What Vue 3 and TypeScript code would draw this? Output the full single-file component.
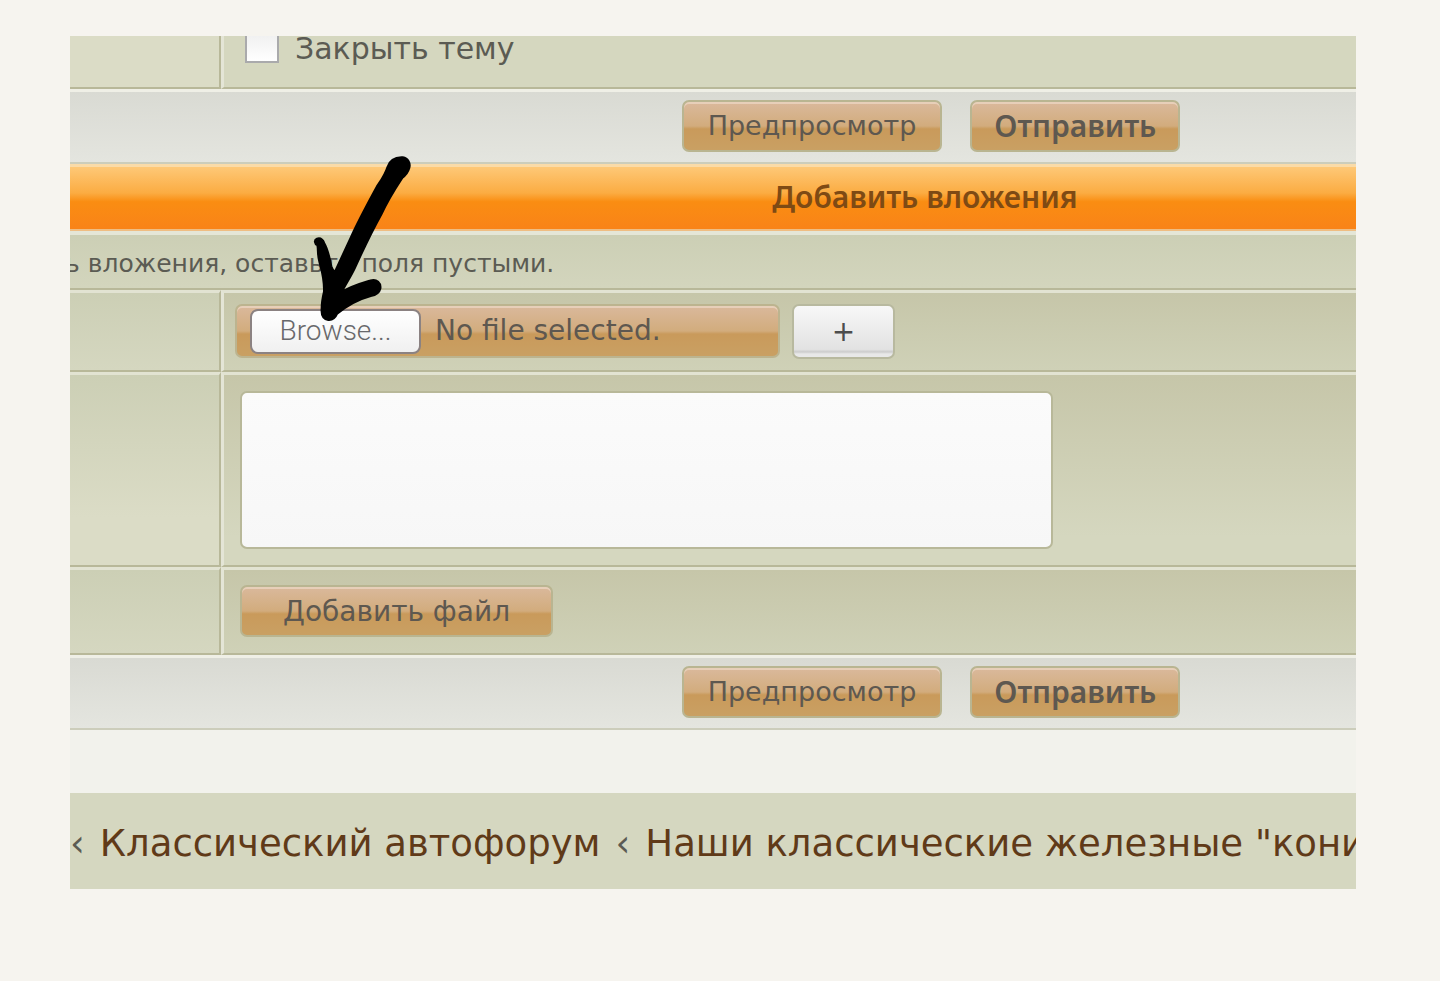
<script setup lang="ts">
import { ref } from 'vue'

const closeTopic = ref(false)
const comment = ref('')
const fileName = ref('No file selected.')

function pickFile(event: Event): void {
  const input = event.target as HTMLInputElement
  fileName.value = input.files?.[0]?.name ?? 'No file selected.'
}
</script>

<template>
  <main class="page">
    <form class="panel" @submit.prevent>
      <div class="row row-close">
        <div class="label-cell"></div>
        <div class="field-cell">
          <label class="check"><input v-model="closeTopic" type="checkbox" />Закрыть тему</label>
        </div>
      </div>
      <div class="actions">
        <button type="button" class="btn">Предпросмотр</button>
        <button type="submit" class="btn strong">Отправить</button>
      </div>
      <h2 class="title">Добавить вложения</h2>
      <p class="hint"><span>ь вложения, оставьте поля пустыми.</span></p>
      <div class="row row-file">
        <div class="label-cell shade"></div>
        <div class="field-cell shade">
          <label class="file">
            <input class="file-input" type="file" @change="pickFile" />
            <span class="browse">Browse...</span>
            <span>{{ fileName }}</span>
          </label>
          <button type="button" class="plus" aria-label="Добавить поле">+</button>
        </div>
      </div>
      <div class="row row-comment">
        <div class="label-cell tall"></div>
        <div class="field-cell tall">
          <textarea v-model="comment" aria-label="Комментарий к файлу"></textarea>
        </div>
      </div>
      <div class="row row-add">
        <div class="label-cell shade"></div>
        <div class="field-cell shade">
          <button type="button" class="btn add">Добавить файл</button>
        </div>
      </div>
      <div class="actions">
        <button type="button" class="btn">Предпросмотр</button>
        <button type="submit" class="btn strong">Отправить</button>
      </div>
    </form>
    <nav class="crumbs">
      <span>‹</span>
      <a href="#forum">Классический автофорум</a>
      <span>‹</span>
      <a href="#cars">Наши классические железные "кони</a>
    </nav>
    <svg class="arrow" viewBox="0 0 390 555" aria-hidden="true">
      <path
        d="M263 67C270 46 288 37 308 38C324 41 331 55 327 69C323 83 316 91 306 98C285 130 265 160 243 208C217 255 195 300 164 368C150 398 137 415 123 443C155 423 185 415 212 407C230 402 243 414 240 431C237 444 228 449 212 452C175 462 140 482 111 505C105 519 95 525 85 524C70 521 64 510 66 490C66 470 69 457 73 440C74 400 67 380 59 350C53 330 56 315 53 300C44 296 43 285 51 282C60 279 68 285 72 295C84 315 88 340 93 364C98 378 102 378 105 382C121 348 137 312 154 276C178 223 204 176 232 124C246 103 256 90 263 67Z"
      />
    </svg>
  </main>
</template>

<style>
body {
  margin: 0;
  background: #f6f4ef;
}
</style>

<style scoped>
.page {
  position: relative;
  margin: 36px 84px 80px 70px;
  overflow: hidden;
  background: #f2f2ec;
  color: #5b5b53;
  font-family: "DejaVu Sans", Verdana, sans-serif;
  font-size: 28px;
  line-height: 34px;
}
.page * {
  box-sizing: border-box;
}
.row {
  display: grid;
  grid-template-columns: 151px 1fr;
}
.label-cell,
.field-cell {
  border-top: 3px solid #e2e3d2;
  border-bottom: 2px solid #b8b899;
  background: #dbdcc6;
}
.label-cell {
  border-right: 2px solid #b8b899;
}
.field-cell {
  display: flex;
  align-items: flex-start;
  gap: 12px;
  border-left: 3px solid #e4e5d6;
  background: #d5d7bf;
}
.label-cell.shade {
  background: linear-gradient(#cccfb5, #d5d7c0);
}
.field-cell.shade {
  background: linear-gradient(#c6c6a9, #cfd1b7);
}
.label-cell.tall {
  background: linear-gradient(#cccfb5, #dbdcc6 75%);
}
.field-cell.tall {
  background: linear-gradient(#c6c6a9, #d5d7bf 85%);
}
.row-close {
  min-height: 53px;
}
.row-close .label-cell,
.row-close .field-cell {
  border-top: 0;
}
.row-close .field-cell {
  padding-left: 21px;
}
.check {
  display: flex;
  gap: 16px;
  margin-top: -4px;
  font-size: 30px;
}
.check input {
  appearance: none;
  width: 34px;
  height: 34px;
  margin: -3px 0 0;
  border: 2px solid #aaaaac;
  background: linear-gradient(#eeeeee, #ffffff);
}
.check input:checked {
  background: #888888;
}
.actions {
  display: flex;
  justify-content: center;
  gap: 28px;
  min-height: 75px;
  padding: 8px 0 10px 436px;
  border-top: 3px solid #efefe6;
  border-bottom: 2px solid #cccdbb;
  background: linear-gradient(#d9dad3, #e4e5df);
}
.btn {
  height: 52px;
  padding: 0 24px;
  border: 2px solid #b9b591;
  border-radius: 7px;
  background: linear-gradient(#dab99c, #d2ac7d 50%, #c99a5b 56%, #c9a063);
  box-shadow: inset 0 2px #e7cfb9;
  color: #5e5850;
  font: 27px/34px "DejaVu Sans", Verdana, sans-serif;
  white-space: nowrap;
}
.btn.strong {
  padding: 0 22px;
  font-family: "Noto Sans", sans-serif;
  font-size: 30px;
  font-weight: 600;
}
.btn.add {
  padding: 2px 41px 0;
  font-size: 28px;
}
.title {
  min-height: 67px;
  margin: 0;
  padding: 13px 0 0 424px;
  border-top: 3px solid #fadba8;
  border-bottom: 2px solid #efbd82;
  background: linear-gradient(#fec877, #fbac42 42%, #fa8d12 56%, #f98318);
  color: #7e4a14;
  font: 600 30px/34px "Noto Sans", sans-serif;
  text-align: center;
}
.hint {
  min-height: 59px;
  margin: 0;
  padding-top: 12px;
  border-top: 4px solid #e4e6d7;
  border-bottom: 2px solid #b8b899;
  background: linear-gradient(#cccfb5, #d3d5bd);
  font-size: 25px;
  line-height: 34px;
  white-space: nowrap;
}
.hint span {
  margin-left: -5px;
}
.row-file {
  min-height: 82px;
}
.row-file .field-cell {
  padding-top: 11px;
  padding-left: 11px;
}
.file {
  display: flex;
  align-items: center;
  gap: 14px;
  width: 545px;
  height: 54px;
  padding: 0 0 0 13px;
  border: 2px solid #bcb48f;
  border-radius: 7px;
  background: linear-gradient(#dab99c, #d2ac7d 50%, #c99a5b 56%, #c9a063);
  box-shadow: inset 0 2px #e7cfb9;
  color: #5e5850;
}
.file-input {
  position: absolute;
  width: 1px;
  height: 1px;
  opacity: 0;
}
.browse {
  width: 171px;
  height: 45px;
  border: 2px solid #8b8282;
  border-radius: 8px;
  background: linear-gradient(#ffffff, #f0f0f0);
  color: #68686b;
  font: 300 28px/40px Roboto, sans-serif;
  text-align: center;
}
.plus {
  width: 103px;
  height: 55px;
  padding: 0;
  border: 2px solid #b8b99f;
  border-radius: 7px;
  background: linear-gradient(#f8f8f8, #e2e2e2 85%, #cccccc 90%, #e8e8e8 94%);
  color: #4d4d4d;
  font: 28px/34px "DejaVu Sans", sans-serif;
}
.row-comment {
  min-height: 195px;
}
.row-comment .field-cell {
  padding: 16px 303px 0 16px;
}
textarea {
  display: block;
  width: 100%;
  height: 158px;
  border: 2px solid #b8b899;
  border-radius: 7px;
  background: linear-gradient(#fbfbfb, #f7f7f7);
  font: 28px/34px "DejaVu Sans", sans-serif;
  resize: none;
}
.row-add {
  min-height: 88px;
}
.row-add .field-cell {
  padding: 15px 0 0 16px;
}
.crumbs {
  display: flex;
  gap: 15px;
  height: 96px;
  margin-top: 63px;
  background: #d5d7c0;
  font-size: 37px;
  line-height: 102px;
  white-space: nowrap;
}
.crumbs a {
  color: #603a18;
  text-decoration: none;
}
/* Hand-drawn pointer over the Browse button */
.arrow {
  position: absolute;
  top: 109px;
  left: 230px;
  width: 130px;
  height: 185px;
  stroke: #000000;
  stroke-width: 8;
  stroke-linejoin: round;
  pointer-events: none;
}
</style>
